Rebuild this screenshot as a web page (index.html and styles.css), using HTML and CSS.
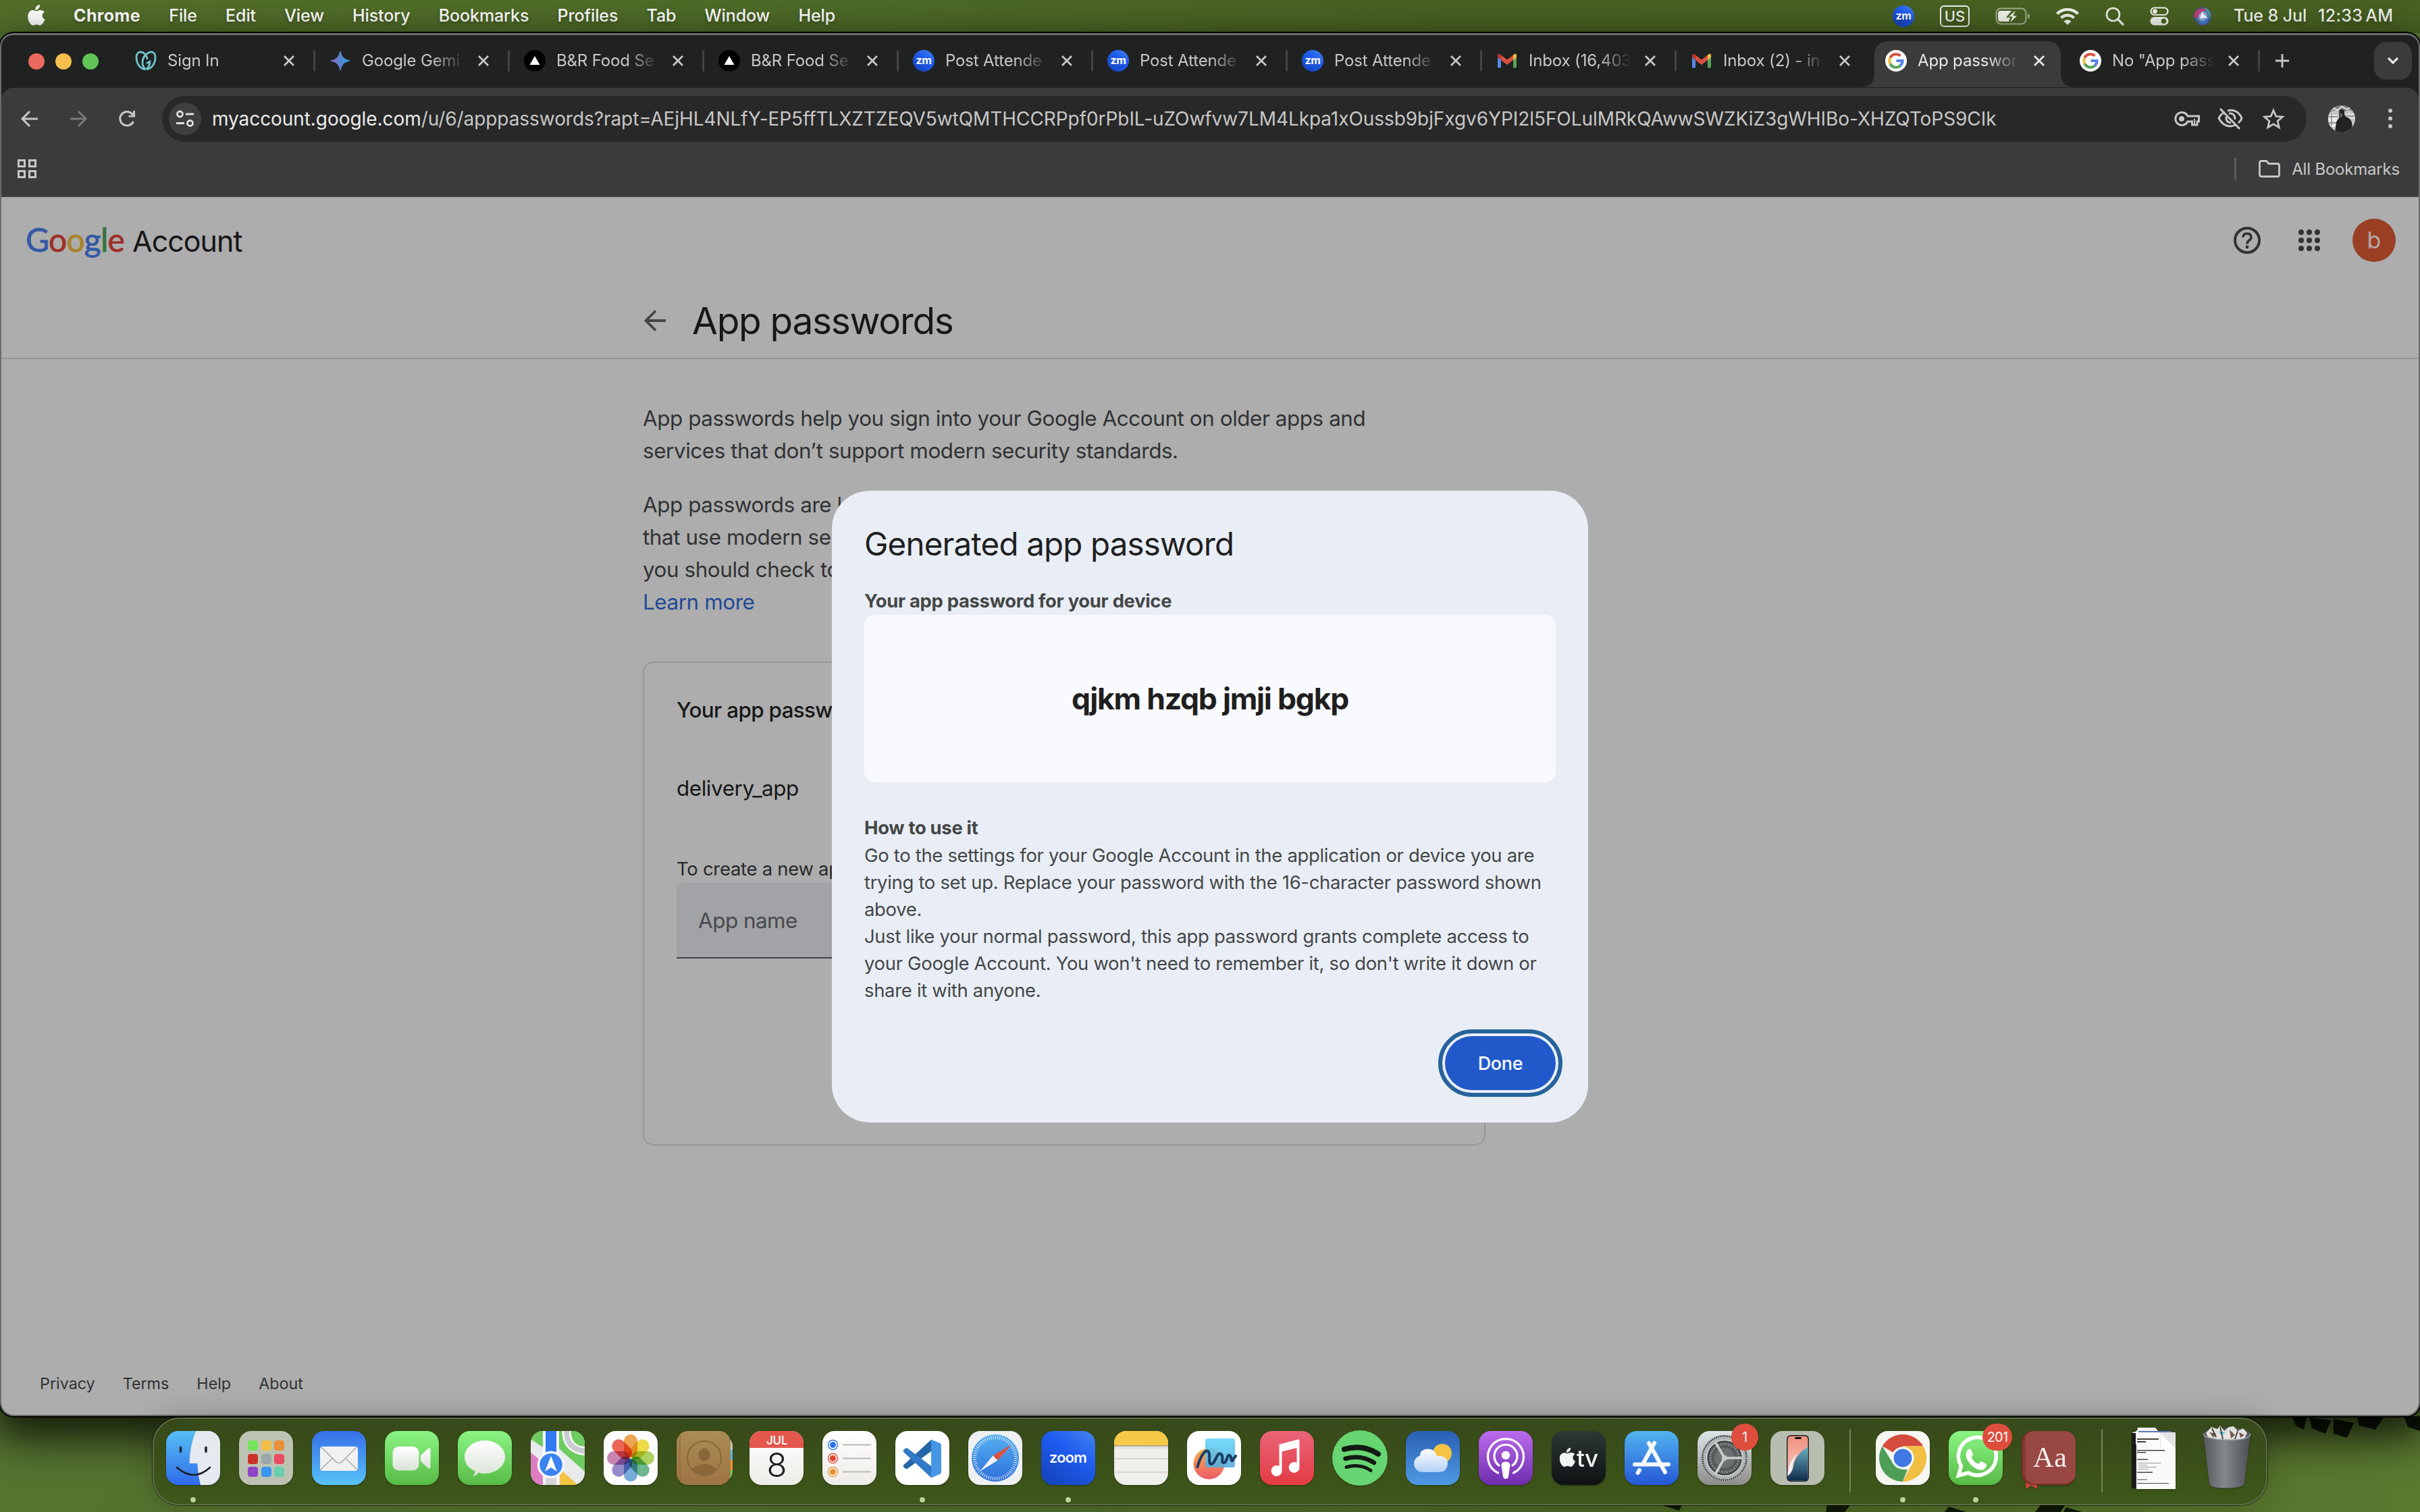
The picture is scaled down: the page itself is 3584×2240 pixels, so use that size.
FILE: index.html
```html
<!DOCTYPE html>
<html lang="en">
<head>
<meta charset="utf-8">
<title>App passwords</title>
<link rel="stylesheet" href="styles.css">
</head>
<body>
<svg class="defs" width="0" height="0" aria-hidden="true">
  <defs>
    <linearGradient id="gZoom" x1="1" y1="0" x2=".3" y2="1"><stop offset="0" stop-color="#4685ea"/><stop offset=".45" stop-color="#1f5cf0"/><stop offset="1" stop-color="#1646c0"/></linearGradient>
    <linearGradient id="gGreen" x1="0" y1="0" x2="0" y2="1"><stop offset="0" stop-color="#8bf585"/><stop offset="1" stop-color="#57bb45"/></linearGradient>
    <linearGradient id="gWhite" x1="0" y1="0" x2="0" y2="1"><stop offset="0" stop-color="#fff"/><stop offset="1" stop-color="#d9e3d6"/></linearGradient>
    <linearGradient id="gPaper" x1="0" y1="0" x2="0" y2="1"><stop offset="0" stop-color="#fff"/><stop offset="1" stop-color="#eeece8"/></linearGradient>
    <linearGradient id="gMail" x1="0" y1="0" x2="0" y2="1"><stop offset="0" stop-color="#356fe8"/><stop offset="1" stop-color="#58c3f8"/></linearGradient>
    <linearGradient id="gFinder" x1="0" y1="0" x2="0" y2="1"><stop offset="0" stop-color="#56bff5"/><stop offset="1" stop-color="#2f6bea"/></linearGradient>
    <linearGradient id="gBrown" x1="0" y1="0" x2="0" y2="1"><stop offset="0" stop-color="#ab8c54"/><stop offset="1" stop-color="#9d7444"/></linearGradient>
    <linearGradient id="gMusic" x1="0" y1="0" x2="0" y2="1"><stop offset="0" stop-color="#ea6478"/><stop offset="1" stop-color="#e43b44"/></linearGradient>
    <linearGradient id="gPod" x1="0" y1="0" x2="0" y2="1"><stop offset="0" stop-color="#bb6bec"/><stop offset="1" stop-color="#6d2cae"/></linearGradient>
    <linearGradient id="gTv" x1="0" y1="0" x2="0" y2="1"><stop offset="0" stop-color="#2c3835"/><stop offset="1" stop-color="#0e1214"/></linearGradient>
    <linearGradient id="gStore" x1="0" y1="0" x2="0" y2="1"><stop offset="0" stop-color="#52b4ef"/><stop offset="1" stop-color="#2557d6"/></linearGradient>
    <linearGradient id="gWeather" x1="0" y1="0" x2="0" y2="1"><stop offset="0" stop-color="#2a5fb4"/><stop offset="1" stop-color="#4f9ae2"/></linearGradient>
    <linearGradient id="gSteel" x1="0" y1="0" x2="0" y2="1"><stop offset="0" stop-color="#dce6ea"/><stop offset="1" stop-color="#8f8d8b"/></linearGradient>
    <linearGradient id="gCloud" x1="0" y1="0" x2="0" y2="1"><stop offset="0" stop-color="#fdfdfb"/><stop offset="1" stop-color="#b4d2f8"/></linearGradient>
    <linearGradient id="gBin" x1="0" y1="0" x2="1" y2="0"><stop offset="0" stop-color="#55595d"/><stop offset=".45" stop-color="#83888c"/><stop offset="1" stop-color="#4a4e52"/></linearGradient>
    <linearGradient id="gSafari" x1="0" y1="0" x2="0" y2="1"><stop offset="0" stop-color="#55b0f0"/><stop offset="1" stop-color="#2f6fdc"/></linearGradient>
    <linearGradient id="gPhone" x1="0" y1="0" x2="0" y2="1"><stop offset="0" stop-color="#f2907e"/><stop offset="1" stop-color="#f6d3cb"/></linearGradient>
    <linearGradient id="gWave" x1="0" y1="0" x2="0" y2="1"><stop offset="0" stop-color="#69b4c4"/><stop offset="1" stop-color="#102c4c"/></linearGradient>
    <linearGradient id="gGem" x1="0" y1="0" x2="1" y2="0"><stop offset="0" stop-color="#9168c0"/><stop offset=".5" stop-color="#5684d1"/><stop offset="1" stop-color="#2fa0d8"/></linearGradient>
    <linearGradient id="gBoard" x1="0" y1="0" x2="0" y2="1"><stop offset="0" stop-color="#66d8fa"/><stop offset="1" stop-color="#5aa9dc"/></linearGradient>
    <linearGradient id="gOrange" x1="0" y1="0" x2="0" y2="1"><stop offset="0" stop-color="#f6b04a"/><stop offset="1" stop-color="#ee5a68"/></linearGradient>
    <radialGradient id="gSiri"><stop offset="0" stop-color="#fff"/><stop offset=".3" stop-color="#9fb6e8"/><stop offset=".7" stop-color="#3c6f98"/><stop offset="1" stop-color="#5a4a60"/></radialGradient>
    <clipPath id="squircle"><rect width="80" height="80" rx="18"/></clipPath>
    <clipPath id="round40"><circle cx="20" cy="20" r="20"/></clipPath>
    <symbol id="close" viewBox="0 0 18 18"><path d="M2 2 16 16M16 2 2 16" stroke="currentColor" stroke-width="2.8" fill="none"/></symbol>
    <symbol id="vercel" viewBox="0 0 32 32"><circle cx="16" cy="16" r="16" fill="#000"/><path d="M16 9 23.5 22H8.500Z" fill="#fff"/></symbol>
    <symbol id="zm" viewBox="0 0 32 32"><circle cx="16" cy="16" r="16" fill="url(#gZoom)"/><text x="16" y="21" text-anchor="middle" class="zm-text">zm</text></symbol>
    <symbol id="gmail" viewBox="0 0 32 32"><path d="M2 26.500V9l5 4v13.500H3.500Q2 26.500 2 25Z" fill="#5687ea"/><path d="M30 25V9l-5 4v13.500h3.500Q30 26.500 30 25Z" fill="#58a55c"/><path d="M25 7.500 27 6q3-1.500 3 2.500V11l-5 4Z" fill="#f1bd42"/><path d="M2 8.500Q2 4.500 5 6l2 1.500V15l-5-4Z" fill="#b5332a"/><path d="M7 7.500 16 14.500 25 7.500V15L16 22 7 15Z" fill="#d95040"/></symbol>
    <symbol id="google" viewBox="0 0 32 32"><circle cx="16" cy="16" r="16" fill="#fff"/><path d="M7.400 11.500A9.600 9.600 0 0 1 22.500 8.800" stroke="#d95040" stroke-width="4" fill="none"/><path d="M7.400 20.500A9.600 9.600 0 0 1 7.400 11.500" stroke="#f1bd42" stroke-width="4" fill="none"/><path d="M22.500 23.200A9.600 9.600 0 0 1 7.400 20.500" stroke="#58a55c" stroke-width="4" fill="none"/><path d="M16.500 16H25.600A9.600 9.600 0 0 1 22.200 23.400" stroke="#5383ec" stroke-width="4" fill="none"/></symbol>
    <symbol id="apple" viewBox="0 0 26 31"><path d="M18 0c.3 2.300-.7 4.400-2 5.800-1.300 1.400-3 2.300-4.700 2.100-.2-2.200.8-4.300 2-5.600C14.600.9 16.500.1 18 0Zm6.800 10.700c-2 1.200-3.200 3-3.200 5.300 0 2.600 1.500 4.700 3.900 5.700-.5 1.700-1.400 3.400-2.400 4.900-1.500 2.100-2.800 4-4.900 4-2 0-2.700-1.200-5.100-1.200-2.300 0-3.200 1.200-5.100 1.200-2.200 0-3.700-2-5.100-4.100C.8 23.300-.8 17.300 1.100 12.900 2.400 9.900 5 8.200 7.700 8.100c2.100 0 3.700 1.300 5.200 1.300 1.500 0 3.400-1.500 6-1.400 2.500.1 4.600 1 5.900 2.700Z" fill="currentColor"/></symbol>
  </defs>
</svg>

<svg class="wallpaper" viewBox="0 0 3584 150" aria-hidden="true">
  <g fill="#0f1808">
    <path d="M3394 8 3416 8 3412 28 3400 22ZM3420 10 3452 14 3444 34 3424 26ZM3456 12 3486 18 3476 40 3456 34ZM3490 8 3530 10 3518 28 3494 22ZM3560 8h24v22l-18-6Z"/>
    <path d="M2461 140h30l-4 8ZM2706 140h34l-8 10h-28ZM2886 142l26 8h-32ZM3022 140h36l-6 10h-38ZM3060 143l24 7h-28Z"/>
  </g>
</svg>

<header class="menubar">
  <svg class="apple" width="26" height="31"><use href="#apple"/></svg>
  <nav class="menus">
    <span class="app">Chrome</span><span>File</span><span>Edit</span><span>View</span><span>History</span><span>Bookmarks</span><span>Profiles</span><span>Tab</span><span>Window</span><span>Help</span>
  </nav>
  <div class="status">
    <svg width="32" height="32"><use href="#zm"/></svg>
    <span class="keyboard">US</span>
    <svg class="battery" width="52" height="26" viewBox="0 0 52 26"><rect x="1.500" y="1.500" width="44" height="23" rx="7" fill="none" stroke="#fff" stroke-opacity=".5" stroke-width="2"/><path d="M48 9q3 1 3 4t-3 4Z" fill="#fff" fill-opacity=".5"/><path d="M8 5H24L16 15h6l-2 6H8q-4 0-4-4V9q0-4 4-4Z" fill="#f1f3ec"/><path d="M31 3 19 14h6l-4 10L33 12h-6Z" fill="#f1f3ec" stroke="#4a6323" stroke-width="1"/></svg>
    <svg class="wifi" width="36" height="26" viewBox="0 0 36 26"><path d="M2.500 9.500a22 22 0 0 1 31 0M8.500 15.500a13.500 13.500 0 0 1 19 0" fill="none" stroke="#f1f3ec" stroke-width="4.400"/><path d="M18 26 12.500 20.500a8 8 0 0 1 11 0Z" fill="#f1f3ec"/></svg>
    <svg class="search" width="28" height="28" viewBox="0 0 28 28"><circle cx="11.500" cy="11.500" r="9.500" fill="none" stroke="#f1f3ec" stroke-width="2.600"/><path d="M18.500 18.500 26 26" stroke="#f1f3ec" stroke-width="3.200" stroke-linecap="round"/></svg>
    <svg class="control" width="28" height="28" viewBox="0 0 28 28"><rect x="1.500" y="1.500" width="25" height="10.500" rx="5.250" fill="none" stroke="#f1f3ec" stroke-width="2.200"/><circle cx="7.500" cy="6.800" r="3.400" fill="#f1f3ec"/><rect x=".5" y="15" width="27" height="12.500" rx="6.250" fill="#f1f3ec"/><circle cx="20.500" cy="21.200" r="3.800" fill="#4a6323"/></svg>
    <svg class="siri" width="28" height="28" viewBox="0 0 28 28"><circle cx="14" cy="14" r="14" fill="url(#gSiri)"/><path d="M1 15C2 4 14-1 22 5 14 5 8 10 7 17Z" fill="#d0356f" opacity=".85"/><path d="M15 1c9 1 13 10 10 17-1-7-4-12-10-17Z" fill="#46b59b" opacity=".8"/><path d="M6 23c7 2 14-2 15-10 4 7 0 14-8 14Z" fill="#3d7fe0" opacity=".8"/><path d="m13 7 3 5 6 5-7-1-5 2 2-4Z" fill="#fff"/></svg>
    <span class="date">Tue 8 Jul</span><span class="time">12:33<span class="ampm">AM</span></span>
  </div>
</header>

<section class="window">
  <div class="tabstrip">
    <div class="lights"><i class="red"></i><i class="yellow"></i><i class="green"></i></div>
    <div class="tab"><svg class="fav" viewBox="0 0 32 32"><path d="M15 29C6 27 2 19 2 11 2 4 7 1.500 12 4q6 4 6 10M17 29C26 27 30 19 30 11 30 4 25 1.500 20 4q-9 5.500-9 14 0 7 5 11M17 28q5-4 5-11l-5 3" fill="none" stroke="#70c3cc" stroke-width="2.800"/></svg><span class="label">Sign In</span><svg class="x"><use href="#close"/></svg></div>
    <div class="tab"><svg class="fav" viewBox="0 0 32 32"><path d="M16 2Q17.500 14.500 30 16 17.500 17.500 16 30 14.500 17.500 2 16 14.500 14.500 16 2Z" fill="url(#gGem)" stroke="url(#gGem)" stroke-width="1.500"/></svg><span class="label">Google Gemi</span><svg class="x"><use href="#close"/></svg></div>
    <div class="tab"><svg class="fav"><use href="#vercel"/></svg><span class="label">B&amp;R Food Se</span><svg class="x"><use href="#close"/></svg></div>
    <div class="tab"><svg class="fav"><use href="#vercel"/></svg><span class="label">B&amp;R Food Se</span><svg class="x"><use href="#close"/></svg></div>
    <div class="tab"><svg class="fav"><use href="#zm"/></svg><span class="label">Post Attende</span><svg class="x"><use href="#close"/></svg></div>
    <div class="tab"><svg class="fav"><use href="#zm"/></svg><span class="label">Post Attende</span><svg class="x"><use href="#close"/></svg></div>
    <div class="tab"><svg class="fav"><use href="#zm"/></svg><span class="label">Post Attende</span><svg class="x"><use href="#close"/></svg></div>
    <div class="tab"><svg class="fav"><use href="#gmail"/></svg><span class="label">Inbox (16,403</span><svg class="x"><use href="#close"/></svg></div>
    <div class="tab no-line"><svg class="fav"><use href="#gmail"/></svg><span class="label">Inbox (2) - in</span><svg class="x"><use href="#close"/></svg></div>
    <div class="tab active no-line"><svg class="shape" viewBox="0 0 316 68"><path d="M0 68Q20 68 20 48V22Q20 0 42 0H274Q296 0 296 22V48Q296 68 316 68Z" fill="#3b3b3b"/></svg><svg class="fav"><use href="#google"/></svg><span class="label">App passwor</span><svg class="x"><use href="#close"/></svg></div>
    <div class="tab"><svg class="fav"><use href="#google"/></svg><span class="label">No "App pass</span><svg class="x"><use href="#close"/></svg></div>
    <svg class="plus" width="22" height="22" viewBox="0 0 22 22"><path d="M11 1V21M1 11H21" stroke="#c7c7c7" stroke-width="2.800"/></svg>
    <div class="tablist"><svg width="18" height="12" viewBox="0 0 18 12"><path d="M2 2 9 9 16 2" fill="none" stroke="#e3e3e3" stroke-width="3.200"/></svg></div>
  </div>

  <div class="toolbar">
    <div class="nav">
      <svg width="26" height="26" viewBox="0 0 26 26"><path d="M13 2 2 13 13 24M2 13H25" fill="none" stroke="#c7c7c7" stroke-width="3"/></svg>
      <svg width="26" height="26" viewBox="0 0 26 26"><path d="M13 2 24 13 13 24M24 13H1" fill="none" stroke="#7a7a7a" stroke-width="3"/></svg>
      <svg width="26" height="26" viewBox="0 0 26 26"><path d="M22.500 17A10.300 10.300 0 1 1 20.500 5.500L23 8.500" fill="none" stroke="#c7c7c7" stroke-width="3"/><path d="M25 1V10.500H15.500V7.700H22V1Z" fill="#c7c7c7"/></svg>
    </div>
    <div class="omnibox">
      <div class="site"><svg width="28" height="28" viewBox="0 0 28 28"><g fill="none" stroke="#e0e0e0" stroke-width="2.800"><circle cx="6.500" cy="7" r="4"/><path d="M15 7H27M1 20.500H13"/><circle cx="21.500" cy="20.500" r="4"/></g></svg></div>
      <div class="url"><b>myaccount.google.com</b>/u/6/apppasswords?rapt=AEjHL4NLfY-EP5ffTLXZTZEQV5wtQMTHCCRPpf0rPbIL-uZOwfvw7LM4Lkpa1xOussb9bjFxgv6YPI2l5FOLulMRkQAwwSWZKiZ3gWHIBo-XHZQToPS9CIk</div>
      <svg width="38" height="24" viewBox="0 0 38 24"><path d="M20 8H36.500V16H34V21H26.500V16H20A9.500 9.500 0 1 1 20 8Z" fill="none" stroke="#c7c7c7" stroke-width="3"/><circle cx="11" cy="12" r="4" fill="#c7c7c7"/><path d="M30 12v8" stroke="#c7c7c7" stroke-width="2"/></svg>
      <svg width="38" height="34" viewBox="0 0 38 34"><path d="M11 7Q5 10 2 16q6 12 17 12 4 0 8-2M15 5q4-1 8-.5 9 2 13 11.500-1 4-5 7" fill="none" stroke="#c7c7c7" stroke-width="3"/><path d="M17 9q9-1 9 9M13 14q-1 8 7 9M4 2 33 32" fill="none" stroke="#c7c7c7" stroke-width="3"/></svg>
      <svg width="34" height="32" viewBox="0 0 34 32"><path d="M17 3.500 20.800 12.300 30.300 13.200 23.100 19.500 25.300 28.800 17 23.900 8.700 28.800 10.900 19.500 3.700 13.200 13.200 12.300Z" fill="none" stroke="#c7c7c7" stroke-width="2.800"/></svg>
    </div>
    <svg class="profile" width="40" height="40" viewBox="0 0 40 40"><g clip-path="url(#round40)"><rect width="40" height="40" fill="#c4c4c4"/><path d="M0 0H40V10L31 7 24 9 13 6 0 11Z" fill="#7c7c7c"/><path d="M3 8 9 4l5 3 6-5 8 4 6-3" stroke="#ddd" stroke-width="2" fill="none"/><path d="M0 14H13V32H0Z" fill="#ececec"/><path d="M27 12H40V20H30Z" fill="#dcdcdc"/><path d="M0 17H13M0 26H12M5 14V30M28 16H40" stroke="#777" stroke-width="1.300"/><path d="M16 8q4-4 8 0v6l3 3.500q6 1.500 8 8l2 15H10l2-16 4.500-6Z" fill="#232323"/><path d="M17 11q3 2 4 0v5l-2.500 2.500Z" fill="#666"/></g></svg>
    <svg class="dots" width="6" height="30" viewBox="0 0 6 30"><g fill="#c7c7c7"><circle cx="3" cy="3" r="3"/><circle cx="3" cy="14.500" r="3"/><circle cx="3" cy="26" r="3"/></g></svg>
  </div>

  <div class="bookmarks">
    <svg width="28" height="28" viewBox="0 0 28 28"><path d="M1.500 1.500h9v9h-9ZM17.500 1.500h9v9h-9ZM1.500 17.500h9v9h-9ZM17.500 17.500h9v9h-9Z" fill="none" stroke="#c7c7c7" stroke-width="3"/></svg>
    <div class="all"><i></i><svg width="32" height="26" viewBox="0 0 32 26"><path d="M1.500 4Q1.500 1.500 4 1.500H11.500L15 5.500H28Q30.500 5.500 30.500 8V22Q30.500 24.500 28 24.500H4Q1.500 24.500 1.500 22Z" fill="none" stroke="#c7c7c7" stroke-width="2.800"/></svg><span>All Bookmarks</span></div>
  </div>

  <div class="page">
    <div class="gbar">
      <div class="brand"><span class="logo"><span class="b">G</span><span class="r">o</span><span class="y">o</span><span class="b">g</span><span class="g">l</span><span class="r">e</span></span><span class="product">Account</span></div>
      <div class="gtools">
        <svg width="40" height="40" viewBox="0 0 40 40"><circle cx="20" cy="20" r="18" fill="none" stroke="#303134" stroke-width="4"/><path d="M14 15.500Q14 10 20 10T26 15.500Q26 18 22.800 20.300 20 22.300 20 25.500" fill="none" stroke="#303134" stroke-width="3.600"/><circle cx="20" cy="30" r="2.400" fill="#303134"/></svg>
        <svg width="32" height="32" viewBox="0 0 32 32"><g fill="#303134"><circle cx="4" cy="4" r="4"/><circle cx="16" cy="4" r="4"/><circle cx="28" cy="4" r="4"/><circle cx="4" cy="16" r="4"/><circle cx="16" cy="16" r="4"/><circle cx="28" cy="16" r="4"/><circle cx="4" cy="28" r="4"/><circle cx="16" cy="28" r="4"/><circle cx="28" cy="28" r="4"/></g></svg>
        <span class="avatar">b</span>
      </div>
    </div>
    <div class="heading">
      <svg width="32" height="32" viewBox="0 0 32 32"><path d="M17 1.500 2.500 16 17 30.500M2.500 16H32" fill="none" stroke="#434548" stroke-width="3.800"/></svg>
      <h1>App passwords</h1>
    </div>
    <main>
      <p>App passwords help you sign into your Google Account on older apps and<br>services that don’t support modern security standards.</p>
      <p>App passwords are l<br>that use modern sec<br>you should check to<br><a>Learn more</a></p>
      <div class="card">
        <h2>Your app passwo</h2>
        <div class="item">delivery_app</div>
        <div class="hint">To create a new ap</div>
        <div class="field">App name</div>
      </div>
    </main>
    <footer><span>Privacy</span><span>Terms</span><span>Help</span><span>About</span></footer>
  </div>
</section>

<section class="dialog">
  <h2>Generated app password</h2>
  <h3>Your app password for your device</h3>
  <div class="password">qjkm hzqb jmji bgkp</div>
  <h3 class="howto">How to use it</h3>
  <p>Go to the settings for your Google Account in the application or device you are<br>trying to set up. Replace your password with the 16-character password shown<br>above.<br>Just like your normal password, this app password grants complete access to<br>your Google Account. You won't need to remember it, so don't write it down or<br>share it with anyone.</p>
  <button>Done</button>
</section>

<div class="dock">
  <div class="icon running"><svg viewBox="0 0 80 80"><g clip-path="url(#squircle)"><rect width="80" height="80" fill="url(#gFinder)"/><path d="M44 0Q35 22 34.500 48H46.500Q47 65 51 80H80V0Z" fill="#e6e9ef"/></g><path d="M21.500 24.500v6M59 24.500v6" stroke="#1c2733" stroke-width="3.600" stroke-linecap="round"/><path d="M16 54Q41 76 65 54" fill="none" stroke="#1c2026" stroke-width="2.600" stroke-linecap="round"/></svg></div>
  <div class="icon"><svg viewBox="0 0 80 80"><rect width="80" height="80" rx="18" fill="#bdc3b3"/><rect x="13" y="14" width="15" height="15" rx="4" fill="#76e25c"/><rect x="33" y="14" width="15" height="15" rx="4" fill="#f4bd45"/><rect x="52" y="14" width="15" height="15" rx="4" fill="#e98f3a"/><rect x="13" y="34" width="15" height="15" rx="4" fill="#cb3127"/><rect x="33" y="34" width="15" height="15" rx="4" fill="#9ea5a8"/><rect x="52" y="34" width="15" height="15" rx="4" fill="#ea4d62"/><rect x="13" y="53" width="15" height="15" rx="4" fill="#8f44c8"/><rect x="33" y="53" width="15" height="15" rx="4" fill="#3a96ee"/><rect x="52" y="53" width="15" height="15" rx="4" fill="#69cfae"/></svg></div>
  <div class="icon"><svg viewBox="0 0 80 80"><rect width="80" height="80" rx="18" fill="url(#gMail)"/><rect x="12" y="23" width="56" height="36" rx="4" fill="#f1f1f1"/><path d="M13 57 31 40M67 57 49 40M14 24 34 44Q40 51 46 44L66 24" fill="none" stroke="#a9acb0" stroke-width="1.600"/></svg></div>
  <div class="icon"><svg viewBox="0 0 80 80"><rect width="80" height="80" rx="18" fill="url(#gGreen)"/><rect x="11.500" y="23" width="39" height="35.500" rx="9" fill="url(#gWhite)"/><path d="M53 36 64 26q3.500-2 3.500 2V53q0 4-3.500 2L53 45Z" fill="url(#gWhite)"/></svg></div>
  <div class="icon"><svg viewBox="0 0 80 80"><rect width="80" height="80" rx="18" fill="url(#gGreen)"/><path d="M40 14C56.500 14 70 25 70 38.500S56.500 63 40 63q-5 0-9.500-1.200Q28 66 22 67.500 26 63 25.500 59.500C16 55.500 10 47.500 10 38.500 10 25 23.500 14 40 14Z" fill="url(#gWhite)"/></svg></div>
  <div class="icon"><svg viewBox="0 0 80 80"><g clip-path="url(#squircle)"><rect width="80" height="80" fill="#e9eaec"/><path d="M0 0H18V24L0 12ZM42 0H80V60L42 26Z" fill="#6ecb60"/><path d="M53-2Q52 28 82 30" fill="none" stroke="#fff" stroke-width="13"/><path d="M53-2Q52 28 82 30" fill="none" stroke="#c9cbd2" stroke-width="8"/><path d="M0 32 20 48V80H0Z" fill="#de7cc0"/><path d="M43 56 70 80H43Z" fill="#f4c443"/><path d="M18 0H42V80H18Z" fill="#f7f7f7"/><path d="M22 0H38V50H22Z" fill="#2f7af0"/><path d="M22 60H38V80H22Z" fill="#d4d5d9"/></g><circle cx="30" cy="50" r="18.500" fill="#3b82f2" stroke="#f6f7f9" stroke-width="3.500"/><path d="M30 37 39 60 30 54 21 60Z" fill="#fff"/></svg></div>
  <div class="icon"><svg viewBox="0 0 80 80"><rect width="80" height="80" rx="18" fill="#fdfdfd"/><g class="petals"><rect x="30" y="5" width="20" height="34" rx="10" fill="#ee9a3b"/><rect x="30" y="5" width="20" height="34" rx="10" fill="#efd935" transform="rotate(45 40 40)"/><rect x="30" y="5" width="20" height="34" rx="10" fill="#a9cf50" transform="rotate(90 40 40)"/><rect x="30" y="5" width="20" height="34" rx="10" fill="#5fb284" transform="rotate(135 40 40)"/><rect x="30" y="5" width="20" height="34" rx="10" fill="#68a6dc" transform="rotate(180 40 40)"/><rect x="30" y="5" width="20" height="34" rx="10" fill="#8a7fc4" transform="rotate(225 40 40)"/><rect x="30" y="5" width="20" height="34" rx="10" fill="#c678ae" transform="rotate(270 40 40)"/><rect x="30" y="5" width="20" height="34" rx="10" fill="#ea5646" transform="rotate(315 40 40)"/></g></svg></div>
  <div class="icon"><svg viewBox="0 0 80 80"><path d="M72 10q10 2 11 10v8H72Z" fill="#c9c6c0"/><path d="M72 28h11v15H72Z" fill="#5db6ea"/><path d="M72 43h11v15H72Z" fill="#f0953a"/><path d="M72 58h11q0 12-8 14Z" fill="#6fd061"/><rect width="80" height="80" rx="17" fill="url(#gBrown)"/><path d="M5 6V74" stroke="#8c6c3c" stroke-width="1.500"/><g fill="#8a6739"><circle cx="41" cy="40" r="25" fill="none" stroke="#8a6739" stroke-width="2"/><ellipse cx="41" cy="35" rx="8.500" ry="9.500"/><path d="M22.500 56Q41 42 59.500 56 52 65 41 65T22.500 56Z"/></g></svg></div>
  <div class="icon"><svg viewBox="0 0 80 80"><g clip-path="url(#squircle)"><rect width="80" height="80" fill="url(#gPaper)"/><rect width="80" height="25" fill="#e4574d"/></g><text x="40.500" y="19.500" text-anchor="middle" class="cal-month">JUL</text><text x="40.500" y="68" text-anchor="middle" class="cal-day">8</text></svg></div>
  <div class="icon"><svg viewBox="0 0 80 80"><rect width="80" height="80" rx="18" fill="url(#gPaper)"/><g stroke="#b9b9b9" stroke-width="2"><path d="M30 20.500H72M30 40.500H72M30 60.500H72"/></g><g stroke="#fff" stroke-width="2"><circle cx="15.500" cy="20.500" r="5.500" fill="#2f74ec"/><circle cx="15.500" cy="40.500" r="5.500" fill="#e2432e"/><circle cx="15.500" cy="60.500" r="5.500" fill="#ec8e2d"/></g><g fill="none" stroke-width="1.400"><circle cx="15.500" cy="20.500" r="7" stroke="#2f74ec"/><circle cx="15.500" cy="40.500" r="7" stroke="#e2432e"/><circle cx="15.500" cy="60.500" r="7" stroke="#ec8e2d"/></g></svg></div>
  <div class="icon running"><svg viewBox="0 0 80 80"><rect width="80" height="80" rx="18" fill="#fff"/><path d="M53 13V30L18.500 55.500Q16 57 14 55L12 53Q11 51.500 12.500 50Z" fill="#2566a8"/><path d="M53 69V52L18.500 26Q16 24.500 14 26.500L12 28.500Q11 30 12.500 31.500Z" fill="#3079c6"/><path d="M53 12.500 66 18Q68 19 68 21V61Q68 63 66 64L53 69.500Z" fill="#4597e6"/></svg></div>
  <div class="icon"><svg viewBox="0 0 80 80"><rect width="80" height="80" rx="18" fill="#eef0f2"/><circle cx="40" cy="40" r="35" fill="url(#gSafari)"/><circle cx="40" cy="40" r="30.500" fill="none" stroke="#d5e8fb" stroke-width="5" stroke-dasharray="1.100 2.090"/><path d="M64.500 20 36.500 36.500 43.500 43.500Z" fill="#e2503f"/><path d="M17 60 36.500 36.500 43.500 43.500Z" fill="#eff2f4"/></svg></div>
  <div class="icon running"><svg viewBox="0 0 80 80"><rect width="80" height="80" rx="18" fill="url(#gZoom)"/><text x="40" y="46.500" text-anchor="middle" textLength="56" class="zoom-text">zoom</text></svg></div>
  <div class="icon"><svg viewBox="0 0 80 80"><g clip-path="url(#squircle)"><rect width="80" height="80" fill="#f0efec"/><rect width="80" height="21" fill="#f6ca46"/><path d="M0 22H80" stroke="#b5a98a" stroke-width="2"/><path d="M0 25H80" stroke="#c5c3be" stroke-width="1.600" stroke-dasharray="1.500 1.500"/><path d="M0 41H80M0 61H80" stroke="#cfcdca" stroke-width="1.600"/></g></svg></div>
  <div class="icon"><svg viewBox="0 0 80 80"><rect width="80" height="80" rx="18" fill="#fff"/><circle cx="32.500" cy="48.500" r="23" fill="url(#gOrange)"/><rect x="27" y="11" width="44" height="43" rx="4" fill="url(#gBoard)" opacity=".9"/><path d="M15.500 53C19 40 26 27 31 30S30 49 36 49 44 30 50 34 49 46 54 47 59 34 63 36 64 45 67 44L72 37" fill="none" stroke="#173f63" stroke-width="4" stroke-linecap="round"/></svg></div>
  <div class="icon"><svg viewBox="0 0 80 80"><rect width="80" height="80" rx="18" fill="url(#gMusic)"/><path d="M28 20 56 12.500Q58.500 12 58.500 14.500V53a8 8 0 1 1-4-6V25L32.500 30.500V58a8 8 0 1 1-4-6V21Z" fill="#fff"/></svg></div>
  <div class="icon"><svg viewBox="0 0 80 80"><circle cx="40" cy="40" r="41" fill="#67d572"/><g fill="none" stroke="#121a12" stroke-linecap="round"><path d="M17 27Q44 19 67 34" stroke-width="8"/><path d="M18.500 41Q42 34.500 61 47" stroke-width="6.500"/><path d="M20 53.500Q40 48 56 58.500" stroke-width="5"/></g></svg></div>
  <div class="icon"><svg viewBox="0 0 80 80"><rect width="80" height="80" rx="18" fill="url(#gWeather)"/><circle cx="54" cy="33" r="14" fill="#f6c443"/><path d="M24 61a12.500 12.500 0 0 1-3-24.500Q21 27 33 26.500 43 26.500 46 37q16-1 16 11.500Q61 61 49 61Z" fill="url(#gCloud)"/></svg></div>
  <div class="icon"><svg viewBox="0 0 80 80"><rect width="80" height="80" rx="18" fill="url(#gPod)"/><g fill="none" stroke="#fff" stroke-width="3.200" stroke-linecap="round"><path d="M28.500 62A26.500 26.500 0 1 1 51.500 62"/><path d="M30 51A17 17 0 1 1 50 51"/></g><circle cx="40" cy="36" r="6.200" fill="#fff"/><path d="M33.500 51Q33.500 45.500 40 45.500T46.500 51L44 67Q43.500 71 40 71T36 67Z" fill="#fff"/></svg></div>
  <div class="icon"><svg viewBox="0 0 80 80"><rect width="80" height="80" rx="18" fill="url(#gTv)"/><svg class="tv-apple" x="11.500" y="24.500" width="24" height="29"><use href="#apple"/></svg><text x="37" y="52.500" textLength="32" class="tv-text">tv</text></svg></div>
  <div class="icon"><svg viewBox="0 0 80 80"><rect width="80" height="80" rx="18" fill="url(#gStore)"/><g stroke="#f5f9fd" stroke-width="6" stroke-linecap="round"><path d="M44 18 27 49"/><path d="M36 18 60 61"/><path d="M15 49.500H65"/><path d="M22 58 19.500 62"/></g></svg></div>
  <div class="icon"><svg viewBox="0 0 80 80"><rect width="80" height="80" rx="18" fill="url(#gSteel)"/><circle cx="40" cy="40" r="34" fill="#2e3131"/><circle cx="40" cy="40" r="30" fill="none" stroke="#b3b7b8" stroke-width="3"/><circle cx="40" cy="40" r="33" fill="none" stroke="#b3b7b8" stroke-width="3" stroke-dasharray="1.600 1.600"/><circle cx="40" cy="40" r="24" fill="#575b5b"/><circle cx="40" cy="40" r="21" fill="none" stroke="#8b8f90" stroke-width="3" stroke-dasharray="2 2"/><circle cx="40" cy="40" r="15" fill="#6d7171"/><circle cx="40" cy="40" r="27" fill="none" stroke="#c3c7c8" stroke-width="3"/><path d="M40 40H67M40 40 26.500 16.500M40 40 26.500 63.500" stroke="#c9cdce" stroke-width="3.600"/><circle cx="40" cy="40" r="4" fill="#c9cdce"/></svg><span class="badge">1</span></div>
  <div class="icon"><svg viewBox="0 0 80 80"><rect width="80" height="80" rx="18" fill="#b7beb0"/><rect x="24" y="6" width="33" height="69" rx="6" fill="#1d2022"/><rect x="25.500" y="7.500" width="30" height="66" rx="5" fill="url(#gPhone)"/><path d="M55.500 23Q36 36 34 52 32 62 25.500 67V69q0 4.500 5 4.500h20q5 0 5-4.500Z" fill="url(#gWave)"/><path d="M25.500 62Q30 40 40 34 32 46 33 54 31 62 25.500 66Z" fill="#f3efee"/><rect x="36" y="9" width="10" height="3" rx="1.500" fill="#111"/></svg></div>
  <i class="divider first"></i>
  <div class="icon running"><svg viewBox="0 0 80 80"><rect width="80" height="80" rx="18" fill="#f5f5f2"/><path d="M40 40 9.700 22.500A35 35 0 0 1 70.300 22.500H40Z" fill="#d44c3d"/><path d="M40 40V22.500H70.300A35 35 0 0 1 40 75L54 48Z" fill="#f3bf42"/><path d="M9.700 22.500 26 49 40 57 47 57 40 75A35 35 0 0 1 9.700 22.500Z" fill="#4f9e58"/><circle cx="40" cy="40" r="16.500" fill="#fff"/><circle cx="40" cy="40" r="13.500" fill="#4079e4"/></svg></div>
  <div class="icon running"><svg viewBox="0 0 80 80"><rect width="80" height="80" rx="18" fill="url(#gGreen)"/><path d="M14.500 66 18.500 52A28 28 0 1 1 29 62Z" fill="none" stroke="#fff" stroke-width="5.500"/><path d="M28 28q3-3 5-.5l3 6.500q.5 1.500-2.500 5 3 7 10.500 10 3-4.500 4.500-4l7 3.500q1 1 .5 3.500-2 5.500-8 6-8-.5-15-8-7-7.500-7.500-14 0-5 2.500-8Z" fill="#fff"/></svg><span class="badge wide">201</span></div>
  <div class="icon"><svg viewBox="0 0 80 80"><path d="M6 70H23V86L14.500 81 6 86Z" fill="#c84438"/><rect width="80" height="80" rx="17" fill="#7f2f2c"/><rect x="3" y="0" width="77" height="78" rx="16" fill="#994743"/><path d="M5 10V72" stroke="#74302d" stroke-width="1.500"/><text x="42" y="52.500" text-anchor="middle" textLength="50" class="dict-text">Aa</text></svg></div>
  <i class="divider second"></i>
  <div class="icon"><svg viewBox="0 0 80 80"><path d="M8 2Q16 2 16-5H42l4 5H66V20H8Z" fill="#f4f4f4"/><path d="M17 0H66V4H17Z" fill="#5b78b8"/><path d="M7 3H13V85H7Z" fill="#1a1a1e"/><path d="M14 2H72V86H14Z" fill="#fafafa"/><path d="M49 2H72V26H52Q49 26 49 23Z" fill="#e3e3e3"/><path d="M50 4 72 26H53Q50 26 50 23Z" fill="#fff"/><g fill="#444"><path d="M15 11H47v2H15ZM15 15H28v2H15ZM15 28H56v1.500H15ZM15 31H28v1.500H15ZM15 41.500H31v1.500H15ZM15 60.500H38v1.500H15ZM15 71.500H30v1H15ZM15 77H62v1H15Z"/></g><g fill="#999"><path d="M17 47H50v1H17ZM17 50H30v1H17ZM17 53H44v1H17ZM17 56H32v1H17Z"/></g></svg></div>
  <div class="icon"><svg viewBox="0 0 80 80"><path d="M5 4Q12 0 75 4L66 78Q65 84 40 84.500T14 78Z" fill="url(#gBin)"/><ellipse cx="40" cy="4" rx="35" ry="9" fill="#54575a"/><path d="M9 3 17-6 26-3 30-8 36 0 43-6 50-7 56 0 64-4 70 3 66 11 50 13 30 13 12 9Z" fill="#e2e2e0"/><path d="M14 2 24 4 20 10ZM44-2 52 6 46 11ZM58 2 66 6 60 10Z" fill="#77594d"/><path d="M28 1 38 2 32 6Z" fill="#4dbad8"/><path d="M30-6 34 12M56 0 52 12M18-4 24 9" stroke="#3d3d40" stroke-width="1.800"/><path d="M5 4Q6 12 40 13T75 4" fill="none" stroke="#a5a9ac" stroke-width="1.600"/></svg></div>
</div>
</body>
</html>
```
FILE: styles.css
```css
* { box-sizing: border-box; margin: 0; padding: 0; }
body {
  position: relative;
  width: 3584px;
  height: 2240px;
  overflow: hidden;
  background: linear-gradient(90deg, #567430 0, #4f6d2a 40%, #4a6524 70%, #5b7a30 100%);
  font-family: Inter, "Liberation Sans", sans-serif;
}
svg { display: block; flex: none; overflow: visible; }
i { display: block; }
.defs { position: absolute; }
.wallpaper { position: absolute; left: 0; bottom: 0; width: 3584px; height: 150px; overflow: hidden; }

/* Menu bar */
.menubar {
  display: flex;
  align-items: center;
  height: 49px;
  padding: 0 39px 1px 41px;
  background: linear-gradient(90deg, #536f2a 0, #4d6a27 35%, #486122 60%, #486222 100%);
  color: #fff;
  font-size: 25px;
  font-weight: 500;
  letter-spacing: -.1px;
  text-shadow: 0 3px 5px rgba(0, 0, 0, .25);
}
.apple { margin-top: -3px; }
.menus { display: flex; gap: 42.200px; margin-left: 42px; padding-bottom: 2px; }
.menus .app { font-weight: 700; letter-spacing: .4px; }
.status { display: flex; align-items: center; margin-left: auto; color: #f1f3ec; }
.keyboard {
  width: 44px;
  height: 32px;
  margin-left: 38px;
  border: 2px solid #f1f3ec;
  border-radius: 6px;
  font-size: 22px;
  line-height: 29px;
  text-align: center;
}
.battery { margin-left: 38px; }
.wifi { margin-left: 37px; }
.search { margin-left: 38px; }
.control { margin-left: 38px; }
.siri { margin-left: 36px; }
.date { width: 109px; margin-left: 32px; letter-spacing: -.1px; white-space: nowrap; padding-bottom: 2px; }
.time { width: 112px; margin-left: 16px; letter-spacing: .3px; white-space: nowrap; padding-bottom: 2px; }
.ampm { margin-left: 4px; }
.zm-text { font: 700 16px Inter, sans-serif; fill: #fff; letter-spacing: -.5px; }

/* Browser window */
.window {
  position: absolute;
  left: 0;
  top: 49px;
  display: flex;
  flex-direction: column;
  width: 3584px;
  height: 2049px;
  border: 2px solid #6a6d6a;
  border-top-width: 3px;
  border-radius: 20px;
  overflow: hidden;
  background: #202221;
  box-shadow: 0 0 0 2px #000, 0 24px 60px 10px rgba(0, 0, 0, .75);
}
.tabstrip { display: flex; align-items: center; height: 78px; padding: 0 10px 2px 40px; }
.lights { display: flex; gap: 16px; width: 136px; padding-top: 2px; }
.lights i { width: 24px; height: 24px; border-radius: 50%; }
.red { background: #ec695e; }
.yellow { background: #f4bf4f; }
.green { background: #61c455; }
.tab { position: relative; display: flex; align-items: center; width: 288px; height: 32px; padding-left: 22px; color: #c7c7c7; }
.tab::after { content: ""; position: absolute; right: -1px; top: 0; width: 3px; height: 32px; border-radius: 2px; background: #424443; }
.tab.no-line::after { display: none; }
.fav { position: relative; width: 32px; height: 32px; }
.label {
  position: relative;
  width: 152px;
  margin-left: 16px;
  overflow: hidden;
  white-space: nowrap;
  font-size: 24px;
  line-height: 32px;
  letter-spacing: -.15px;
  -webkit-mask-image: linear-gradient(90deg, #000 104px, transparent 152px);
  mask-image: linear-gradient(90deg, #000 104px, transparent 152px);
}
.x { position: relative; width: 18px; height: 18px; margin-left: 19px; }
.tab.active { color: #e6e6e6; }
.shape { position: absolute; left: -14px; top: -13px; width: 316px; height: 68px; }
.plus { margin-left: 23px; }
.tablist { display: flex; align-items: center; justify-content: center; width: 56px; height: 56px; margin-left: auto; border-radius: 18px; background: #3b3b3b; }

.toolbar { display: flex; align-items: center; height: 92px; padding: 0 39px 0 29px; background: #3b3b3b; border-radius: 18px 18px 0 0; }
.nav { display: flex; gap: 46px; width: 209px; }
.omnibox { display: flex; align-items: center; width: 3176px; height: 68px; padding: 0 32px 0 10px; border-radius: 34px; background: #282828; }
.site { display: flex; align-items: center; justify-content: center; width: 48px; height: 48px; border-radius: 50%; background: #3f3f3f; }
.url { width: 2908px; margin-left: 16px; font-size: 28px; line-height: 40px; letter-spacing: -.065px; color: #c7c7c7; white-space: nowrap; }
.url b { font-weight: 400; color: #ebebeb; }
.omnibox > .url + svg { margin-right: 26px; }
.omnibox > .url + svg + svg { margin-right: 28px; }
.profile { margin-left: 32px; }
.dots { margin-left: auto; }

.bookmarks { display: flex; align-items: center; justify-content: space-between; height: 70px; padding: 0 28px 12px 24px; background: #3b3b3b; border-bottom: 2px solid #454545; }
.all { display: flex; align-items: center; color: #c7c7c7; font-size: 24px; letter-spacing: -.2px; }
.all i { width: 3px; height: 32px; margin-right: 33px; background: #5c5c5c; }
.all span { margin-left: 17px; }

/* Account page, dimmed behind the dialog */
.page { display: flex; flex-direction: column; flex: 1; background: #adadad; color: #303234; }
.gbar { display: flex; align-items: center; justify-content: space-between; height: 128px; padding: 0 34px 0 36px; }
.brand { display: flex; align-items: baseline; padding-bottom: 3px; }
.logo { width: 158px; font: 400 48px/60px Lato, sans-serif; letter-spacing: -.8px; }
.logo span { -webkit-text-stroke: .8px currentColor; }
.b { color: #3359a5; }
.r { color: #9d3129; }
.y { color: #a8822a; }
.g { color: #35753f; }
.product { color: #161718; font-size: 43px; letter-spacing: -1px; }
.gtools { display: flex; align-items: center; }
.gtools svg + svg { margin-left: 56px; }
.avatar { width: 64px; height: 64px; margin-left: 48px; border-radius: 50%; background: #9a3f24; color: #b5aaa6; font-size: 34px; line-height: 63px; text-align: center; }
.heading { display: flex; align-items: center; height: 112px; padding-left: 952px; border-bottom: 2px solid #959595; }
.heading h1 { margin-left: 39px; color: #161718; font-size: 55px; font-weight: 400; letter-spacing: -1.300px; }
main { flex: 1; width: 2198px; padding: 64px 0 0 950px; font-size: 31.400px; line-height: 48px; letter-spacing: -.42px; }
main p { margin-bottom: 32px; white-space: nowrap; }
main a { color: #224a97; }
.card { width: 1248px; height: 717px; margin-top: 64px; padding: 46px 48px; border: 2px solid #979797; border-radius: 16px; color: #161718; white-space: nowrap; }
.card h2 { font-size: 31.400px; font-weight: 500; letter-spacing: -.65px; }
.item { margin-top: 68px; }
.hint { margin-top: 75px; font-size: 27.400px; line-height: 40px; color: #26282a; letter-spacing: -.25px; }
.field { height: 112px; margin-top: 1px; padding-left: 32px; border-bottom: 2px solid #3f4144; border-radius: 8px 8px 0 0; background: #a2a3a6; color: #47494c; line-height: 112px; letter-spacing: -.5px; }
footer { display: flex; gap: 41px; padding: 0 0 31px 57px; color: #303234; font-size: 23.300px; line-height: 30px; }

/* Dialog */
.dialog {
  position: absolute;
  left: 1232px;
  top: 727px;
  display: flex;
  flex-direction: column;
  width: 1120px;
  height: 936px;
  padding: 49px 48px 0;
  border-radius: 56px;
  background: #e9eef6;
  color: #444746;
}
.dialog h2 { color: #1f1f1f; font-size: 47.500px; font-weight: 400; line-height: 60px; letter-spacing: -.85px; }
.dialog h3 { margin-top: 34px; font-size: 27.400px; font-weight: 700; line-height: 40px; letter-spacing: -.3px; }
.dialog .howto { margin-top: 47px; }
.password { display: flex; align-items: center; justify-content: center; height: 248px; margin-top: 1px; border-radius: 16px; background: #f9fafd; color: #1f1f1f; font-size: 44.500px; font-weight: 700; letter-spacing: -1.250px; }
.dialog p { padding-top: 1px; font-size: 27.500px; line-height: 40px; letter-spacing: -.33px; white-space: nowrap; }
.dialog button { align-self: flex-end; width: 164px; height: 80px; margin-top: 48px; border: 0; border-radius: 40px; outline: 6px solid #27639b; outline-offset: 4px; background: #2159cb; color: #fff; font: 500 27px Inter, sans-serif; letter-spacing: -.3px; }

/* Dock */
.dock {
  position: absolute;
  left: 226px;
  top: 2100px;
  display: flex;
  gap: 28px;
  width: 3132px;
  height: 130px;
  padding: 18px 0 0 18px;
  border: 2px solid #5c6c47;
  border-radius: 40px;
  background: linear-gradient(#37491a, #3e5719);
  box-shadow: 0 0 0 1px rgba(0, 0, 0, .5), 0 0 44px rgba(0, 0, 0, .22);
}
.icon { position: relative; flex: none; width: 80px; height: 80px; filter: drop-shadow(0 1px 1px rgba(0, 0, 0, .35)); }
.icon > svg { width: 80px; height: 80px; }
.running::after { content: ""; position: absolute; left: 36px; top: 98px; width: 8px; height: 8px; border-radius: 50%; background: #bad293; }
.divider { flex: none; width: 2px; height: 94px; margin-top: -3px; background: #74845c; }
.divider.first { margin-left: 9px; margin-right: 9px; }
.divider.second { margin-left: 10px; margin-right: 8px; }
.badge { position: absolute; right: -10px; top: -11px; width: 40px; height: 40px; border-radius: 20px; background: #df4d3d; color: #fff; font-size: 20px; line-height: 40px; text-align: center; }
.badge.wide { width: 44px; right: -14px; letter-spacing: -.8px; }
.petals rect { mix-blend-mode: multiply; opacity: .9; }
.cal-month { font: 600 17px Inter, sans-serif; fill: #fff; letter-spacing: -.4px; }
.cal-day { font: 300 49px Inter, sans-serif; fill: #1d1d1d; }
.zoom-text { font: 600 22px Inter, sans-serif; fill: #fff; }
.tv-apple { color: #f3f4f4; }
.tv-text { font: 500 35px Inter, sans-serif; fill: #f3f4f4; }
.dict-text { font: 42px "Liberation Serif", serif; fill: #f2ecea; }
```
